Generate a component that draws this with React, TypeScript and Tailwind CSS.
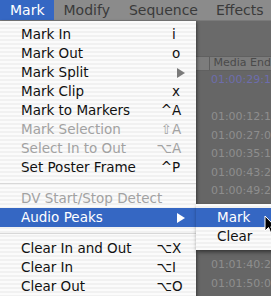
import React from "react";

const font = { fontFamily: '"DejaVu Sans", "Liberation Sans", sans-serif' };

type Item =
  | { kind: "sep" }
  | {
      kind: "item";
      label: string;
      mod?: string;
      key?: string;
      sub?: boolean;
      disabled?: boolean;
      active?: boolean;
    };

const items: Item[] = [
  { kind: "item", label: "Mark In", key: "i" },
  { kind: "item", label: "Mark Out", key: "o" },
  { kind: "item", label: "Mark Split", sub: true },
  { kind: "item", label: "Mark Clip", key: "x" },
  { kind: "item", label: "Mark to Markers", mod: "^", key: "A" },
  { kind: "item", label: "Mark Selection", mod: "⇧", key: "A", disabled: true },
  { kind: "item", label: "Select In to Out", mod: "⌥", key: "A", disabled: true },
  { kind: "item", label: "Set Poster Frame", mod: "^", key: "P" },
  { kind: "sep" },
  { kind: "item", label: "DV Start/Stop Detect", disabled: true },
  { kind: "item", label: "Audio Peaks", sub: true, active: true },
  { kind: "sep" },
  { kind: "item", label: "Clear In and Out", mod: "⌥", key: "X" },
  { kind: "item", label: "Clear In", mod: "⌥", key: "I" },
  { kind: "item", label: "Clear Out", mod: "⌥", key: "O" },
];

const rows: { a: string; b: string; blue?: boolean }[] = [
  { a: "00", b: "01:00:29:1", blue: true },
  { a: "", b: "" },
  { a: "00", b: "01:00:12:1" },
  { a: "16", b: "01:00:27:0" },
  { a: "28", b: "01:00:35:1" },
  { a: "10", b: "01:00:43:2" },
  { a: "29", b: "01:00:49:2" },
  { a: "", b: "" },
  { a: "", b: "" },
  { a: "", b: "" },
  { a: "20", b: "01:01:40:2" },
  { a: "21", b: "01:01:50:0" },
];

function Arrow({ color }: { color: string }) {
  return (
    <svg width="8" height="10" viewBox="0 0 8 10" className="ml-[5px]">
      <path d="M0 0 L8 5 L0 10 Z" fill={color} />
    </svg>
  );
}

export default function App() {
  return (
    <div
      className="relative w-[271px] h-[296px] overflow-hidden bg-[#666666] flex flex-col"
      style={font}
    >
      {/* Menu bar */}
      <div className="h-[21px] flex items-stretch bg-[#8b8b8b] text-[14px] text-[#3a3a3a] border-b border-[#7a7a7a]">
        <div className="pl-[10px] pr-[9px] flex items-center bg-[#3567c3] text-white">
          Mark
        </div>
        <div className="px-[10px] flex items-center">Modify</div>
        <div className="px-[9px] flex items-center">Sequence</div>
        <div className="px-[9px] flex items-center">Effects</div>
      </div>

      {/* Dimmed background window */}
      <div className="flex-1 flex flex-col bg-[#666666] text-[11px]">
        <div className="h-[35px] bg-[#6a6a6a]" />
        <div className="h-[15px] flex items-center bg-[#7c7c7c] border-y border-[#606060] text-[#4a4a4a]">
          <div className="w-[208px]" />
          <div className="w-[14px] h-full border-r border-[#5e5e5e]" />
          <div className="pl-[4px] whitespace-nowrap">Media End</div>
        </div>
        {rows.map((r, i) => (
          <div
            key={i}
            className={`h-[18.5px] flex items-center whitespace-nowrap ${
              r.blue ? "text-[#6d6dad]" : "text-[#8e8e8e]"
            }`}
          >
            <div className="w-[208px] text-right text-[10px]">{r.a}</div>
            <div className="pl-[18px]">{r.b}</div>
          </div>
        ))}
      </div>

      {/* Mark menu */}
      <div className="absolute left-0 top-[21px] w-[196px] h-[290px] pt-[4px] text-[13.5px] bg-[repeating-linear-gradient(180deg,#fbfbfb_0px,#fbfbfb_2px,#f1f1f1_2px,#f1f1f1_4px)] shadow-[1px_1px_3px_rgba(0,0,0,0.45)]">
        {items.map((it, i) =>
          it.kind === "sep" ? (
            <div key={i} className="h-[12px] flex items-center">
              <div className="w-full h-px bg-[#d8d8d8]" />
            </div>
          ) : (
            <div
              key={i}
              className={`h-[19px] flex items-center pl-[21px] pr-[11px] whitespace-nowrap ${
                it.active
                  ? "bg-[#3567c3] text-white"
                  : it.disabled
                  ? "text-[#a2a2a2]"
                  : "text-[#111111]"
              }`}
            >
              <span className="flex-1">{it.label}</span>
              <span className="w-[20px] text-right">{it.mod ?? ""}</span>
              <span className="w-[13px] flex items-center">
                {it.sub ? (
                  <Arrow color={it.active ? "#ffffff" : "#7a7a7a"} />
                ) : (
                  it.key ?? ""
                )}
              </span>
            </div>
          )
        )}
      </div>

      {/* Audio Peaks submenu */}
      <div className="absolute left-[196px] top-[204px] w-[90px] py-[4px] text-[13.5px] bg-[repeating-linear-gradient(180deg,#fbfbfb_0px,#fbfbfb_2px,#f1f1f1_2px,#f1f1f1_4px)] shadow-[1px_2px_4px_rgba(0,0,0,0.5)]">
        <div className="h-[19px] flex items-center pl-[21px] bg-[#3567c3] text-white">
          Mark
        </div>
        <div className="h-[19px] flex items-center pl-[21px] text-[#111111]">
          Clear
        </div>
      </div>

      {/* Cursor */}
      <svg
        className="absolute left-[264px] top-[215px]"
        width="13"
        height="21"
        viewBox="0 0 13 21"
      >
        <path
          d="M1 1 L1 16 L4.5 12.5 L7 18.5 L9.2 17.6 L6.8 11.8 L11.5 11.8 Z"
          fill="#000"
          stroke="#fff"
          strokeWidth="1"
          strokeLinejoin="round"
        />
      </svg>
    </div>
  );
}
